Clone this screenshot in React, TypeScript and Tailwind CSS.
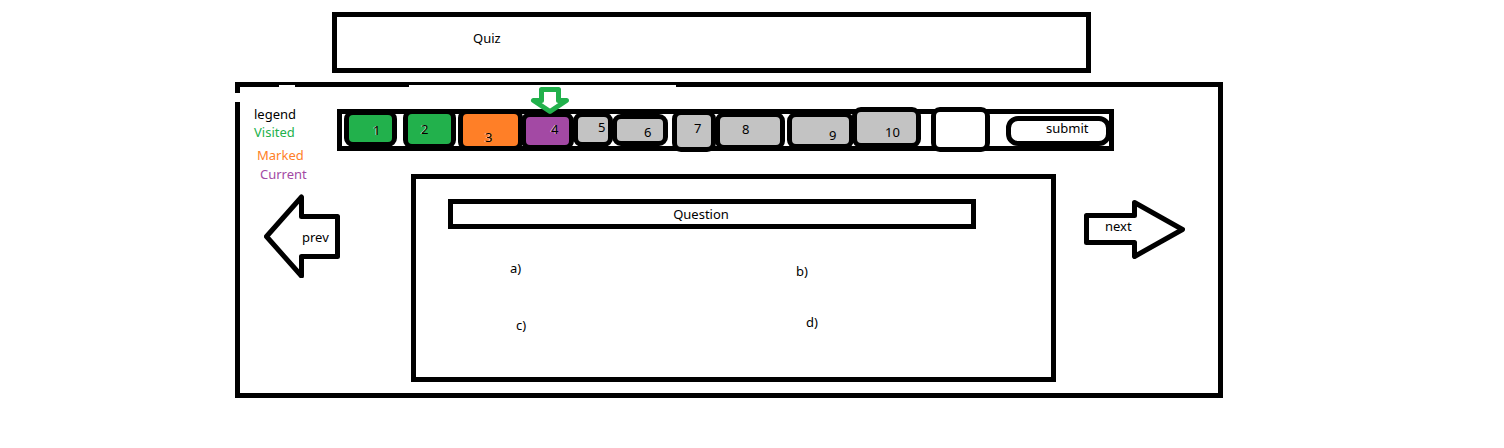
import React from "react";

type Item = { label: string; box: string };

const items: Item[] = [
  { label: "1", box: "ml-[2px] mt-[-4px] w-[53px] h-[37px] bg-[#22b14c] pl-6 pt-2 [text-shadow:-1px_0_0_#ffffffaa]" },
  { label: "2", box: "ml-[6px] mt-[-5px] w-[53px] h-[40px] bg-[#22b14c] pl-[13px] pt-2 [text-shadow:-1px_0_0_#ffffffaa]" },
  { label: "3", box: "ml-[2px] mt-[-5px] w-[65px] h-[42px] bg-[#ff7f27] pl-[22px] pt-4 [text-shadow:-1px_0_0_#ffffffaa]" },
  { label: "4", box: "ml-[-2px] mt-[-2px] w-[53px] h-[38px] bg-[#a349a4] pl-[25px] pt-[5px] [text-shadow:-1px_0_0_#ffffffaa]" },
  { label: "5", box: "ml-[-1px] mt-[-2px] w-[40px] h-[35px] bg-[#c3c3c3] pl-5 pt-[3px]" },
  { label: "6", box: "ml-[-1px] w-[56px] h-[32px] bg-[#c3c3c3] pl-[27px] pt-[6px]" },
  { label: "7", box: "ml-[4px] mt-[-4px] w-[44px] h-[42px] bg-[#c3c3c3] pl-[17px] pt-[6px]" },
  { label: "8", box: "ml-[-1px] mt-[-2px] w-[70px] h-[38px] bg-[#c3c3c3] pl-[22px] pt-[5px]" },
  { label: "9", box: "ml-[2px] mt-[-2px] w-[67px] h-[37px] bg-[#c3c3c3] pl-[37px] pt-[11px]" },
  { label: "10", box: "ml-[-2px] mt-[-7px] w-[69px] h-[41px] bg-[#c3c3c3] pl-[28px] pt-[13px]" },
  { label: "", box: "ml-[10px] mt-[-7px] w-[59px] h-[45px] bg-white" },
];

const options = [
  { label: "a)", box: "pl-[94px] pt-[32px]" },
  { label: "b)", box: "pl-[100px] pt-[35px]" },
  { label: "c)", box: "pl-[100px] pt-[40px]" },
  { label: "d)", box: "pl-[110px] pt-[37px]" },
];

function CurrentMarker() {
  return (
    <svg
      className="absolute -top-[31px] left-1 z-10 h-[30px] w-10"
      viewBox="0 0 40 30"
      fill="white"
      stroke="#22b14c"
      strokeWidth="5"
      strokeLinejoin="round"
      aria-hidden="true"
    >
      <path d="M11.5 3.5H28.5V14.5H36.5L20 25.5L3.5 14.5H11.5Z" />
    </svg>
  );
}

function Legend() {
  return (
    <ul className="w-[97px] shrink-0 pl-[14px] pt-5">
      <li>legend</li>
      <li className="pt-1 text-[#22b14c]">Visited</li>
      <li className="pl-[3px] pt-[9px] text-[#ff7f27]">Marked</li>
      <li className="pl-[6px] pt-[5px] text-[#a349a4]">Current</li>
    </ul>
  );
}

function QuestionNav() {
  return (
    <nav
      aria-label="Questions"
      className="mr-[104px] mt-[22px] flex h-[42px] flex-1 items-start border-5 border-black"
    >
      {items.map((item, i) => (
        <button
          key={i}
          type="button"
          aria-label={item.label ? undefined : "Empty slot"}
          className={`relative flex shrink-0 items-start rounded-[9px] border-5 border-black ${item.box}`}
        >
          {item.label}
          {item.label === "4" && <CurrentMarker />}
        </button>
      ))}
      <button
        type="submit"
        className="-mr-[2px] ml-4 mt-[2px] flex h-[30px] flex-1 items-start rounded-[12px] border-5 border-black bg-white pl-[35px]"
      >
        submit
      </button>
    </nav>
  );
}

export default function App() {
  return (
    <div className="min-h-screen bg-white pb-12 pl-[235px] pr-[281px] pt-3 font-['Noto_Sans',sans-serif] text-[13px] leading-[14px] text-black">
      <header className="ml-[97px] mr-[132px] h-[61px] border-5 border-black pl-[136px] pt-[14px]">
        <h1>Quiz</h1>
      </header>

      <main className="relative mt-[9px] border-5 border-black pb-[11px]">
        <span className="absolute -left-[5px] top-[6px] h-[9px] w-[5px] bg-white" />
        <span className="absolute -top-[2px] left-[39px] h-[2px] w-4 bg-white" />
        <span className="absolute -top-[2px] left-[169px] h-[2px] w-[267px] bg-white" />

        <div className="flex h-[87px] items-start">
          <Legend />
          <QuestionNav />
        </div>

        <div className="flex items-start pl-6 pr-[33px]">
          <button type="button" className="relative mr-[71px] mt-5 shrink-0">
            <svg
              className="h-[84px] w-[76px]"
              viewBox="0 0 76 84"
              fill="white"
              stroke="black"
              strokeWidth="5"
              strokeLinejoin="round"
              aria-hidden="true"
            >
              <path d="M2.5 42.5L37.5 3V22.5H73.5V62.5H37.5V82Z" />
            </svg>
            <span className="absolute left-[38px] top-9">prev</span>
          </button>

          <section className="h-[208px] flex-1 border-5 border-black">
            <h2 className="ml-8 mr-[75px] mt-5 h-[30px] border-5 border-black pt-[3px] pr-[22px] text-center">
              Question
            </h2>
            <div className="mr-[75px] grid grid-cols-2">
              {options.map((o) => (
                <button key={o.label} type="button" className={`flex items-start ${o.box}`}>
                  {o.label}
                </button>
              ))}
            </div>
          </section>

          <button type="button" className="relative ml-7 mt-[26px] shrink-0">
            <svg
              className="h-[59px] w-[101px]"
              viewBox="0 0 101 59"
              fill="white"
              stroke="black"
              strokeWidth="5"
              strokeLinejoin="round"
              aria-hidden="true"
            >
              <path d="M2.5 15.5H50.5V2.5L98.5 29.5L50.5 56.5V42.5H2.5Z" />
            </svg>
            <span className="absolute left-[21px] top-[19px]">next</span>
          </button>
        </div>
      </main>
    </div>
  );
}
